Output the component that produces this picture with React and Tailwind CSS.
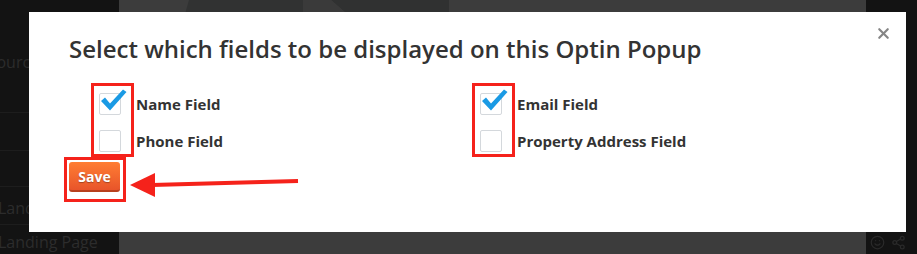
import { X, Smile, Share2 } from "lucide-react";

const font = { fontFamily: '"Open Sans", "Liberation Sans", sans-serif' };

const Box = ({ checked }) => (
  <div className="relative w-[22px] h-[22px] border border-[#d4d8dc] rounded-[2px] bg-white">
    {checked && (
      <svg className="absolute -left-[1px] -top-[6px]" width="28" height="26" viewBox="0 0 28 26">
        <path d="M2 13 L6 9.5 L11 15.5 L24 1.5 L27.5 4 L11 22.5 Z" fill="#1a9ae4" />
      </svg>
    )}
  </div>
);

const FieldGroup = ({ fields }) => (
  <div className="flex items-start">
    <div className="flex flex-col gap-[15px] border-[3px] border-[#f5221b] pl-[5px] pr-[10px] pt-[7px] pb-[2px]">
      {fields.map((f) => (
        <Box key={f.label} checked={f.checked} />
      ))}
    </div>
    <div className="flex flex-col gap-[15px] pl-[2px] pt-[10px]">
      {fields.map((f) => (
        <div key={f.label} className="h-[22px] flex items-center text-[15px] font-bold text-[#333]">
          {f.label}
        </div>
      ))}
    </div>
  </div>
);

export default function App() {
  return (
    <div className="relative w-[917px] h-[254px] overflow-hidden flex bg-[#131313]" style={font}>
      {/* left sidebar */}
      <div className="w-[119px] flex flex-col text-[16px] text-[#2c2c2c]">
        <div className="h-[113px] flex items-end pb-[38px] -ml-[30px] border-b border-[#1d1d1d]">Resources</div>
        <div className="h-[38px] border-b border-[#1d1d1d]" />
        <div className="h-[36px] border-b border-[#1d1d1d]" />
        <div className="h-[38px] border-b border-[#1d1d1d] flex items-end pb-[4px] -ml-[2px]">Landing Page</div>
        <div className="flex items-center h-[29px] pt-[4px] -ml-[2px]">Landing Page</div>
      </div>

      {/* main area */}
      <div className="relative flex-1 bg-[#3c3c3c]">
        <svg className="absolute left-0 top-0" width="330" height="14" viewBox="0 0 330 14">
          <polygon points="70,0 184,0 184,14 66,14" fill="#313232" />
          <polygon points="212,0 330,0 330,14 228,14" fill="#303131" />
          <polygon points="184,0 212,0 228,14 184,14" fill="#3a3a3a" />
        </svg>
      </div>

      {/* right sidebar */}
      <div className="w-[51px] flex flex-col justify-end">
        <div className="flex items-center gap-[6px] pl-[4px] pb-[4px] text-[#2a2a2a]">
          <Smile size={15} strokeWidth={2} />
          <Share2 size={15} strokeWidth={2} />
        </div>
      </div>

      {/* modal */}
      <div className="absolute left-[29px] top-[12px] w-[877px] h-[220px] bg-white">
        <button className="absolute left-[846px] top-[13px] text-[#858585]">
          <X size={17} strokeWidth={3} />
        </button>

        <h2 className="ml-[40px] mt-[22px] text-[24px] leading-[30px] text-[#333] font-semibold">
          Select which fields to be displayed on this Optin Popup
        </h2>

        <div className="flex mt-[19px] ml-[62px]">
          <div className="w-[381px]">
            <FieldGroup
              fields={[
                { label: "Name Field", checked: true },
                { label: "Phone Field", checked: false },
              ]}
            />
          </div>
          <FieldGroup
            fields={[
              { label: "Email Field", checked: true },
              { label: "Property Address Field", checked: false },
            ]}
          />
        </div>

        <div className="ml-[35px] inline-flex border-[3px] border-[#f5221b] pl-[2px] pr-[3px] pt-[2px] pb-[7px]">
          <button className="w-[51px] h-[30px] rounded-[3px] bg-gradient-to-b from-[#ff7d33] to-[#e8542a] border-b-2 border-[#b8401e] text-white text-[14px] font-bold [text-shadow:0_1px_1px_rgba(0,0,0,0.3)]">
            Save
          </button>
        </div>

        <svg className="absolute left-[99px] top-[158px]" width="174" height="32" viewBox="0 0 174 32">
          <line x1="170" y1="11" x2="24" y2="15" stroke="#f5221b" strokeWidth="4" />
          <polygon points="2,15 27,3 27,27" fill="#f5221b" />
        </svg>
      </div>
    </div>
  );
}
